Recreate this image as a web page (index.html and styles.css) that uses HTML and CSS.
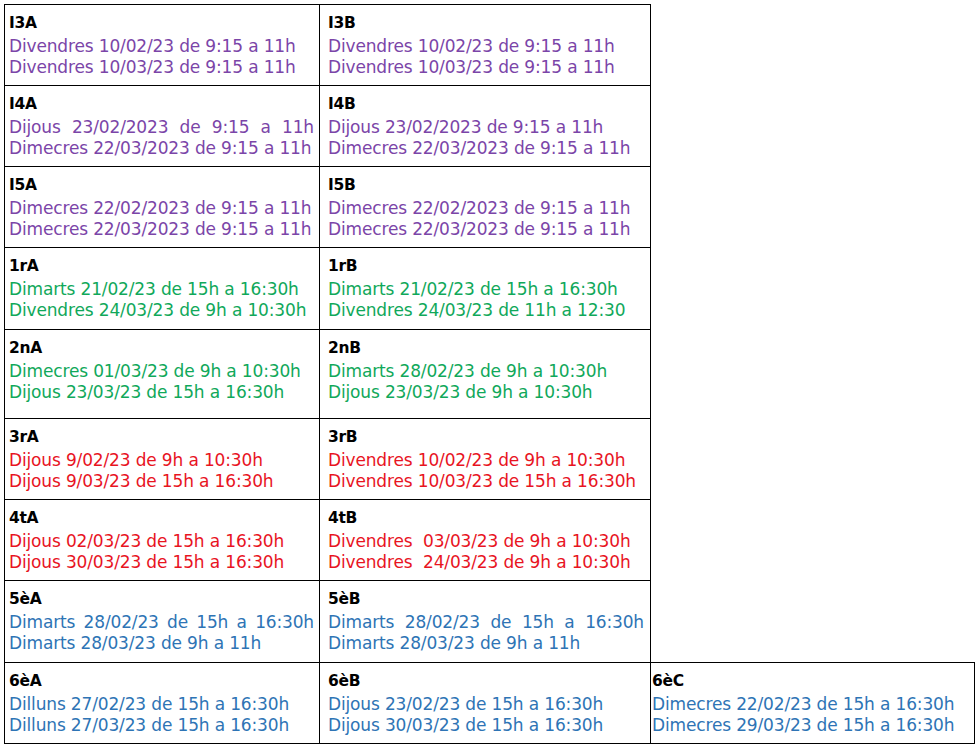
FILE: index.html
```html
<!DOCTYPE html>
<html lang="ca">
<head>
<meta charset="utf-8">
<title>Horaris</title>
<link rel="stylesheet" href="styles.css">
</head>
<body>
<table class="sched">
  <colgroup><col class="c1"><col class="c2"><col class="c3"></colgroup>
  <tr class="r">
    <td class="ca"><div class="lbl">I3A</div><div class="ln purple">Divendres 10/02/23 de 9:15 a 11h</div><div class="ln purple">Divendres 10/03/23 de 9:15 a 11h</div></td>
    <td class="cb"><div class="lbl">I3B</div><div class="ln purple">Divendres 10/02/23 de 9:15 a 11h</div><div class="ln purple">Divendres 10/03/23 de 9:15 a 11h</div></td>
  </tr>
  <tr class="r">
    <td class="ca"><div class="lbl">I4A</div><div class="ln purple just">Dijous 23/02/2023 de 9:15 a 11h</div><div class="ln purple">Dimecres 22/03/2023 de 9:15 a 11h</div></td>
    <td class="cb"><div class="lbl">I4B</div><div class="ln purple">Dijous 23/02/2023 de 9:15 a 11h</div><div class="ln purple">Dimecres 22/03/2023 de 9:15 a 11h</div></td>
  </tr>
  <tr class="r">
    <td class="ca"><div class="lbl">I5A</div><div class="ln purple">Dimecres 22/02/2023 de 9:15 a 11h</div><div class="ln purple">Dimecres 22/03/2023 de 9:15 a 11h</div></td>
    <td class="cb"><div class="lbl">I5B</div><div class="ln purple">Dimecres 22/02/2023 de 9:15 a 11h</div><div class="ln purple">Dimecres 22/03/2023 de 9:15 a 11h</div></td>
  </tr>
  <tr class="r r82">
    <td class="ca"><div class="lbl">1rA</div><div class="ln green">Dimarts 21/02/23 de 15h a 16:30h</div><div class="ln green">Divendres 24/03/23 de 9h a 10:30h</div></td>
    <td class="cb"><div class="lbl">1rB</div><div class="ln green">Dimarts 21/02/23 de 15h a 16:30h</div><div class="ln green">Divendres 24/03/23 de 11h a 12:30</div></td>
  </tr>
  <tr class="r r89">
    <td class="ca"><div class="lbl">2nA</div><div class="ln green">Dimecres 01/03/23 de 9h a 10:30h</div><div class="ln green">Dijous 23/03/23 de 15h a 16:30h</div></td>
    <td class="cb"><div class="lbl">2nB</div><div class="ln green">Dimarts 28/02/23 de 9h a 10:30h</div><div class="ln green">Dijous 23/03/23 de 9h a 10:30h</div></td>
  </tr>
  <tr class="r">
    <td class="ca"><div class="lbl">3rA</div><div class="ln red">Dijous 9/02/23 de 9h a 10:30h</div><div class="ln red">Dijous 9/03/23 de 15h a 16:30h</div></td>
    <td class="cb"><div class="lbl">3rB</div><div class="ln red">Divendres 10/02/23 de 9h a 10:30h</div><div class="ln red">Divendres 10/03/23 de 15h a 16:30h</div></td>
  </tr>
  <tr class="r">
    <td class="ca"><div class="lbl">4tA</div><div class="ln red">Dijous 02/03/23 de 15h a 16:30h</div><div class="ln red">Dijous 30/03/23 de 15h a 16:30h</div></td>
    <td class="cb"><div class="lbl">4tB</div><div class="ln red">Divendres&nbsp; 03/03/23 de 9h a 10:30h</div><div class="ln red">Divendres&nbsp; 24/03/23 de 9h a 10:30h</div></td>
  </tr>
  <tr class="r r82">
    <td class="ca"><div class="lbl">5èA</div><div class="ln blue just">Dimarts 28/02/23 de 15h a 16:30h</div><div class="ln blue">Dimarts 28/03/23 de 9h a 11h</div></td>
    <td class="cb"><div class="lbl">5èB</div><div class="ln blue just">Dimarts 28/02/23 de 15h a 16:30h</div><div class="ln blue">Dimarts 28/03/23 de 9h a 11h</div></td>
  </tr>
  <tr class="r">
    <td class="ca"><div class="lbl">6èA</div><div class="ln blue">Dilluns 27/02/23 de 15h a 16:30h</div><div class="ln blue">Dilluns 27/03/23 de 15h a 16:30h</div></td>
    <td class="cb"><div class="lbl">6èB</div><div class="ln blue">Dijous 23/02/23 de 15h a 16:30h</div><div class="ln blue">Dijous 30/03/23 de 15h a 16:30h</div></td>
    <td class="cc"><div class="lbl">6èC</div><div class="ln blue">Dimecres 22/02/23 de 15h a 16:30h</div><div class="ln blue">Dimecres 29/03/23 de 15h a 16:30h</div></td>
  </tr>
</table>
</body>
</html>
```

FILE: styles.css
```css
html, body {
  margin: 0;
  padding: 0;
  background: #fff;
}
body {
  padding: 4px 0 0 4px;
  font-family: "DejaVu Sans", "Liberation Sans", sans-serif;
}
.sched {
  border-collapse: collapse;
  table-layout: fixed;
  width: 970px;
}
.c1 { width: 315px; }
.c2 { width: 331px; }
.c3 { width: 324px; }
.sched td {
  border: 1px solid #000;
  vertical-align: top;
  padding: 6px 0 0 0;
  overflow: hidden;
}
.r { height: 81px; }
.r82 { height: 82px; }
.r89 { height: 89px; }
.ca { padding-left: 4px !important; padding-right: 5px !important; }
.cb { padding-left: 8px !important; padding-right: 6px !important; }
.cc { padding-left: 1px !important; padding-right: 4px !important; }
.lbl {
  font-weight: bold;
  font-size: 15.5px;
  line-height: 25px;
  color: #000;
  letter-spacing: -0.3px;
}
.ln {
  font-size: 17px;
  line-height: 21px;
  white-space: nowrap;
  letter-spacing: -0.15px;
}
.just {
  white-space: normal;
  text-align: justify;
  text-align-last: justify;
}
.purple { color: #7b45a8; }
.green { color: #10a85a; }
.red { color: #e8141f; }
.blue { color: #2e74b5; }
```
